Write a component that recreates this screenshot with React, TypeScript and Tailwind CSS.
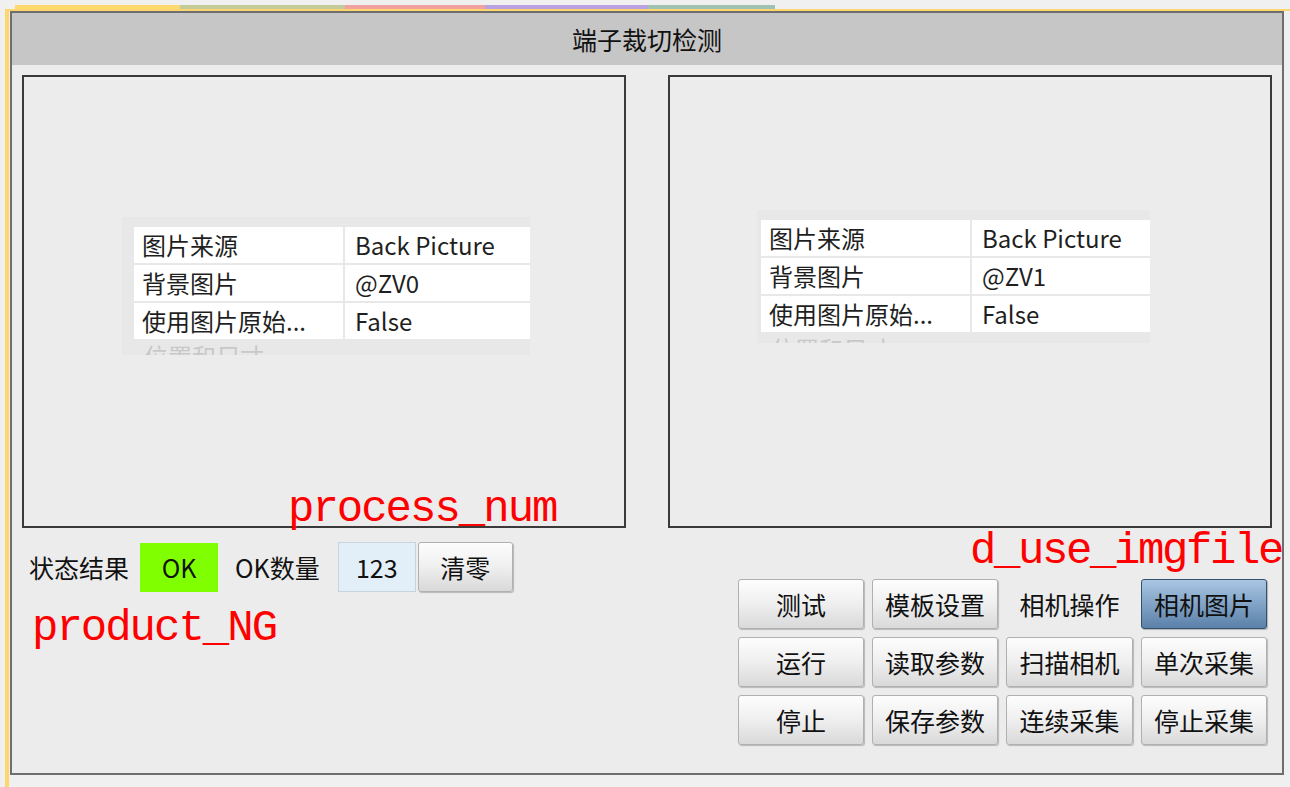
import React from "react";

type Row = { name: string; value: string };

const cjk = "font-['Noto_Sans_CJK_SC','Noto_Sans',sans-serif]";
const redLabel =
  "absolute font-['Liberation_Mono',monospace] text-[44px] leading-[44px] text-[#ff0000] whitespace-nowrap";
const btn =
  "flex items-center justify-center rounded-[3px] border border-[#b0b0b0] bg-linear-to-b from-[#fdfdfd] via-[#efefef] to-[#d9d9d9] shadow-[1px_1px_1px_rgba(0,0,0,0.22)] text-[25px] leading-none text-[#111]";

function PropGrid({ rows, className }: { rows: Row[]; className: string }) {
  return (
    <div className={`flex flex-col overflow-hidden bg-[#e8e8e8] pt-[10px] text-[24px] leading-none text-[#1f1f1f] ${className}`}>
      {rows.map((r) => (
        <div key={r.name} className="mb-[2px] flex h-[36px] shrink-0 gap-[2px]">
          <div className="flex w-[209px] shrink-0 items-center bg-white pl-[8px]">{r.name}</div>
          <div className="flex flex-1 items-center whitespace-nowrap bg-white pl-[10px]">{r.value}</div>
        </div>
      ))}
      {/* next category, cut off by the viewer */}
      <div className="pl-[10px] pt-[3px] text-[#c8c8c8]">位置和尺寸</div>
    </div>
  );
}

export default function App() {
  const left: Row[] = [
    { name: "图片来源", value: "Back Picture" },
    { name: "背景图片", value: "@ZV0" },
    { name: "使用图片原始...", value: "False" },
  ];
  const right: Row[] = [
    { name: "图片来源", value: "Back Picture" },
    { name: "背景图片", value: "@ZV1" },
    { name: "使用图片原始...", value: "False" },
  ];

  return (
    <div className={`relative flex h-[787px] w-[1290px] flex-col overflow-hidden bg-[#f0f0f0] ${cjk}`}>
      {/* tab colour strip */}
      <div className="mt-[5px] flex h-[4px] pl-[15px]">
        <div className="w-[165px] bg-[#ffd86e]" />
        <div className="w-[165px] bg-[#c3cb9b]" />
        <div className="w-[140px] bg-[#f2a1a1]" />
        <div className="w-[163px] bg-[#b9a2e2]" />
        <div className="w-[127px] bg-[#9fc3b3]" />
      </div>

      <div className="ml-[5px] flex flex-1 border-l-[4px] border-t-2 border-[#ffd66e]">
        <div className="ml-[1px] flex h-[764px] w-[1274px] flex-col border-2 border-[#6e6e6e] bg-[#ececec]">
          <div className="flex h-[52px] shrink-0 items-center justify-center bg-[#c6c6c6] text-[25px] leading-none text-[#111]">
            端子裁切检测
          </div>

          {/* image viewers */}
          <div className="flex gap-[42px] px-[10px] pt-[10px]">
            <div className="flex h-[453px] w-[604px] items-start border-2 border-[#3a3a3a]">
              <PropGrid rows={left} className="ml-[98px] mt-[140px] h-[138px] w-[408px] pl-[12px]" />
            </div>
            <div className="flex h-[453px] w-[604px] items-start border-2 border-[#3a3a3a]">
              <PropGrid rows={right} className="ml-[87px] mt-[133px] h-[133px] w-[393px] pl-[4px]" />
            </div>
          </div>

          <div className="flex justify-between">
            {/* result / counter */}
            <div className="ml-[17px] mt-[14px] flex h-[50px] items-center self-start text-[25px] leading-none text-[#111]">
              <span>状态结果</span>
              <div className="ml-[11px] flex h-[49px] w-[78px] items-center justify-center bg-[#80ff00]">OK</div>
              <span className="ml-[17px]">OK数量</span>
              <div className="ml-[18px] flex h-[50px] w-[78px] items-center justify-center border border-[#c6d4e0] bg-[#e2eff9]">
                123
              </div>
              <button className={`ml-[2px] h-[50px] w-[95px] ${btn}`}>清零</button>
            </div>

            {/* controls */}
            <div className="mr-[15px] mt-[51px] grid grid-cols-[126px_126px_127px_126px] grid-rows-[50px_50px_50px] gap-x-[8px] gap-y-[8px]">
              <button className={btn}>测试</button>
              <button className={btn}>模板设置</button>
              <div className="flex items-center justify-center text-[25px] leading-none text-[#111]">相机操作</div>
              <button className="flex items-center justify-center rounded-[3px] border border-[#34506c] bg-linear-to-b from-[#aac7e4] to-[#5b81a9] text-[25px] leading-none text-[#111] shadow-[1px_1px_1px_rgba(0,0,0,0.25)]">
                相机图片
              </button>
              <button className={btn}>运行</button>
              <button className={btn}>读取参数</button>
              <button className={btn}>扫描相机</button>
              <button className={btn}>单次采集</button>
              <button className={btn}>停止</button>
              <button className={btn}>保存参数</button>
              <button className={btn}>连续采集</button>
              <button className={btn}>停止采集</button>
            </div>
          </div>
        </div>
      </div>

      {/* variable name tags */}
      <span className={`${redLabel} left-[288px] top-[487px] tracking-[-2px]`}>process_num</span>
      <span className={`${redLabel} left-[970px] top-[529px] tracking-[-2.4px]`}>d_use_imgfile</span>
      <span className={`${redLabel} left-[32px] top-[606px] tracking-[-2px]`}>product_NG</span>
    </div>
  );
}
